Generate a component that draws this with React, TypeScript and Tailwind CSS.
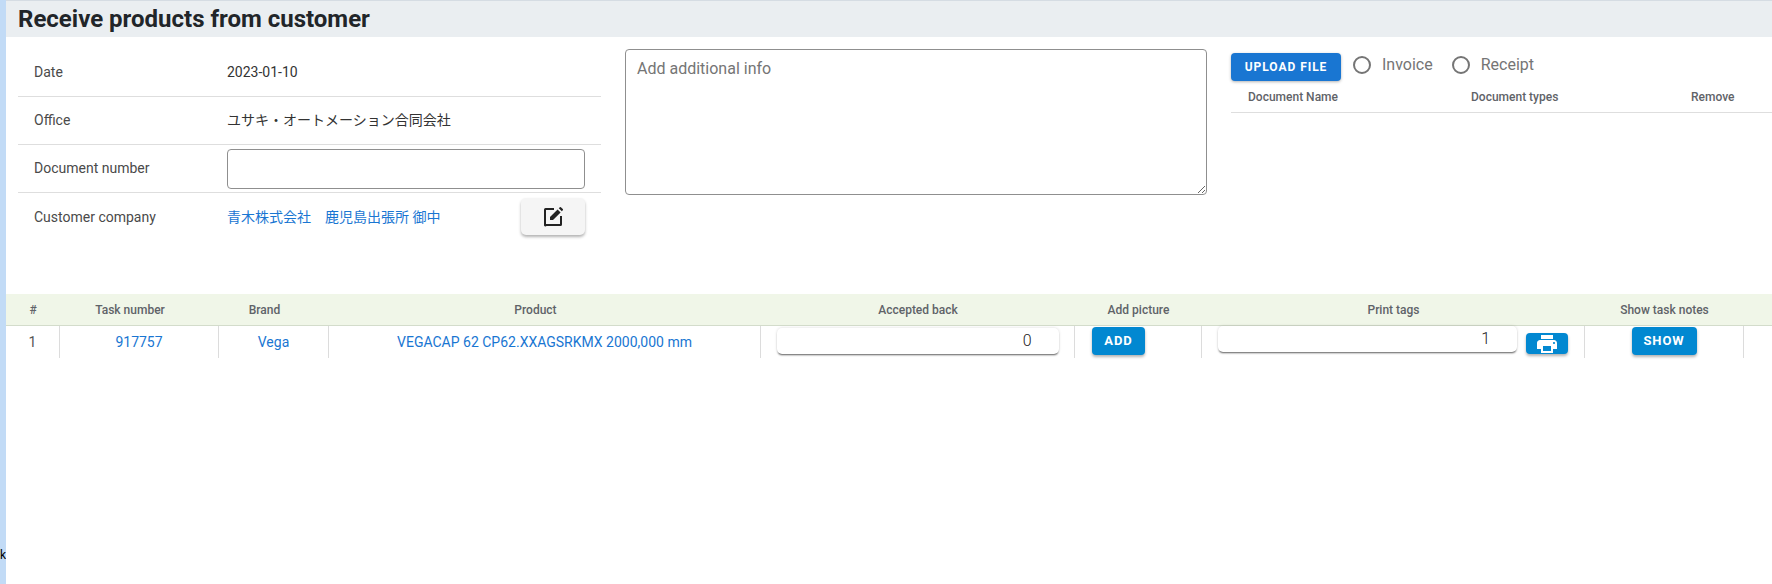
import { MdPrint } from 'react-icons/md'

const rowLabel = 'w-[209px] shrink-0 pl-4 text-[14px] text-[#4a4a4a]'
const headCell = 'flex items-center justify-center text-[12px] font-medium text-[#5f6368]'
const bodyCell = 'flex justify-center border-r border-[#dcdcdc] text-[14px]'
const gridCols = 'grid grid-cols-[54px_159px_110px_432px_314px_127px_383px_159px_28px]'
const blueBtn = 'rounded-[4px] bg-[#0288d1] text-[13px] font-bold tracking-[0.07em] text-white shadow-[0_2px_3px_rgba(0,0,0,0.3)]'
const numberBox = 'rounded-[5px] bg-white text-right text-[16px] font-light text-[#222] shadow-[0_2px_2px_-1px_rgba(0,0,0,0.6),0_0_3px_rgba(0,0,0,0.15)]'

function EditIcon() {
  return (
    <svg viewBox="0 0 24 24" className="h-6 w-6" fill="#222">
      <path d="M5.5 3H13v2H5v14h14v-8h2v8.5a1.5 1.5 0 0 1-1.5 1.5h-14A1.5 1.5 0 0 1 3 19.5v-15A1.5 1.5 0 0 1 4.5 3z" />
      <path d="M16.6 4.4 19.6 7.4 12 15H9v-3zM17.8 3.2l1-1a.8.8 0 0 1 1.1 0l1.9 1.9a.8.8 0 0 1 0 1.1l-1 1z" />
    </svg>
  )
}

function Radio({ label }: { label: string }) {
  return (
    <label className="flex items-center gap-[11px] text-[16px] text-[#757575]">
      <span className="h-[18px] w-[18px] rounded-full border-2 border-[#757575]" />
      {label}
    </label>
  )
}

export default function App() {
  return (
    <div className="flex h-screen bg-white font-['Roboto','Noto_Sans_CJK_JP',sans-serif]">
      {/* side strip */}
      <div className="flex w-[6px] shrink-0 flex-col items-end justify-end overflow-hidden bg-[#c2dbf6] pb-[21px] text-[12px] leading-[16px] text-black">
        k
      </div>

      <div className="min-w-0 flex-1">
        <div className="h-[37px] border-t border-[#d5dce3] bg-[#eaeef1] pl-[12px] text-[24px] leading-[36px] font-bold text-[#212529]">
          Receive products from customer
        </div>

        <div className="flex h-[257px] items-start">
          {/* details */}
          <div className="mt-[12px] ml-[12px] w-[583px] shrink-0 text-[14px]">
            <div className="flex h-[48px] items-center border-b border-[#dedede]">
              <div className={rowLabel}>Date</div>
              <div className="text-[#333]">2023-01-10</div>
            </div>
            <div className="flex h-[48px] items-center border-b border-[#dedede]">
              <div className={rowLabel}>Office</div>
              <div className="text-[#333]">ユサキ・オートメーション合同会社</div>
            </div>
            <div className="flex h-[48px] items-center border-b border-[#dedede]">
              <div className={rowLabel}>Document number</div>
              <input className="h-[40px] w-[358px] rounded-[4px] border border-[#8f8f8f] bg-white" />
            </div>
            <div className="flex h-[48px] items-center">
              <div className={rowLabel}>Customer company</div>
              <div className="w-[294px] shrink-0 text-[#1976d2]">青木株式会社　鹿児島出張所 御中</div>
              <button className="-mt-[1px] flex h-[37px] w-[64px] items-center justify-center rounded-[5px] bg-[#f5f5f5] shadow-[0_2px_3px_rgba(0,0,0,0.3)]">
                <EditIcon />
              </button>
            </div>
          </div>

          {/* notes */}
          <textarea
            placeholder="Add additional info"
            className="mt-[12px] ml-[24px] h-[146px] w-[582px] shrink-0 rounded-[4px] border border-[#8f8f8f] px-[11px] py-[7px] text-[16px] placeholder:text-[#757575]"
          />

          {/* documents */}
          <div className="mt-[16px] ml-[24px] min-w-0 flex-1">
            <div className="flex items-start">
              <button className="h-[28px] w-[110px] rounded-[4px] bg-[#1976d2] text-[12px] font-bold tracking-[0.08em] text-white shadow-[0_1px_3px_rgba(0,0,0,0.3)]">
                UPLOAD FILE
              </button>
              <div className="ml-[12px] flex h-[24px] gap-[19px]">
                <Radio label="Invoice" />
                <Radio label="Receipt" />
              </div>
            </div>
            <div className="grid h-[32px] grid-cols-[223px_220px_1fr] items-center border-b border-[#dedede] pl-[17px] text-[12px] font-medium text-[#5f6368]">
              <div>Document Name</div>
              <div>Document types</div>
              <div>Remove</div>
            </div>
          </div>
        </div>

        {/* task table */}
        <div className={`${gridCols} h-[32px] border-b border-[#d3dccb] bg-[#f0f6e8]`}>
          <div className={headCell}>#</div>
          <div className={`${headCell} pr-[19px]`}>Task number</div>
          <div className={`${headCell} pr-[19px]`}>Brand</div>
          <div className={`${headCell} pr-[19px]`}>Product</div>
          <div className={headCell}>Accepted back</div>
          <div className={headCell}>Add picture</div>
          <div className={headCell}>Print tags</div>
          <div className={headCell}>Show task notes</div>
          <div />
        </div>
        <div className={`${gridCols} h-[32px]`}>
          <div className={`${bodyCell} items-center text-[#555]`}>1</div>
          <div className={`${bodyCell} items-center text-[#1976d2]`}>917757</div>
          <div className={`${bodyCell} items-center text-[#1976d2]`}>Vega</div>
          <div className={`${bodyCell} items-center text-[#1976d2]`}>VEGACAP 62 CP62.XXAGSRKMX 2000,000 mm</div>
          <div className={`${bodyCell} pt-[2px]`}>
            <div className={`${numberBox} h-[26px] w-[282px] pr-[27px] leading-[26px]`}>0</div>
          </div>
          <div className={`${bodyCell} justify-start pt-[1px] pl-[17px]`}>
            <button className={`${blueBtn} h-[28px] w-[53px]`}>ADD</button>
          </div>
          <div className={`${bodyCell} justify-start pl-[16px]`}>
            <div className={`${numberBox} h-[26px] w-[299px] pr-[27px] leading-[26px]`}>1</div>
            <button className={`${blueBtn} mt-[7px] ml-[9px] flex h-[21px] w-[42px] items-center justify-center overflow-hidden`}>
              <MdPrint className="h-6 w-6 shrink-0" />
            </button>
          </div>
          <div className={`${bodyCell} pt-[1px]`}>
            <button className={`${blueBtn} h-[28px] w-[65px]`}>SHOW</button>
          </div>
          <div />
        </div>
      </div>
    </div>
  )
}
